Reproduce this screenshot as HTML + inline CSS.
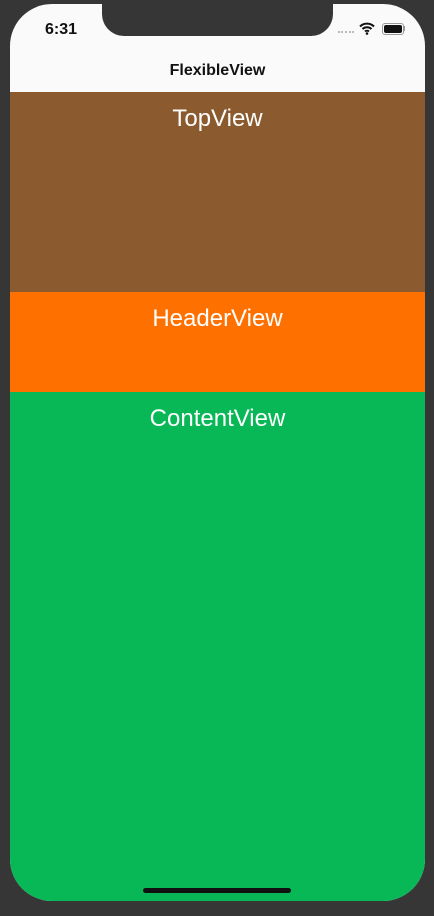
<!DOCTYPE html><html><head><style>
body{margin:0;width:434px;height:916px;background:#363636;position:relative;overflow:hidden;font-family:"Liberation Sans",sans-serif}
.scr{position:absolute;left:10px;top:4px;width:415px;height:897px;border-radius:42px;overflow:hidden;background:#fafafa}
.notch{position:absolute;left:92px;top:-2px;width:231px;height:34px;background:#363636;border-radius:0 0 22px 22px}
.t{position:absolute;left:0;width:415px;text-align:center;color:#fff;font-size:24px}
</style></head><body>
<div class="scr">
<div class="notch"></div>
<div style="position:absolute;left:35px;top:17px;font-size:16px;font-weight:bold;color:#111">6:31</div>
<div style="position:absolute;left:328px;top:27px;width:16px;height:2px;border-top:2px dotted #bbb"></div>
<svg style="position:absolute;left:349px;top:18px" width="16" height="13" viewBox="0 0 16 13"><path d="M1 4.5a10 10 0 0 1 14 0M3.5 7a6.5 6.5 0 0 1 9 0M6 9.5a3 3 0 0 1 4 0" stroke="#111" stroke-width="2" fill="none"/><circle cx="8" cy="11.5" r="1.3" fill="#111"/></svg>
<div style="position:absolute;left:372px;top:19px;width:20px;height:10px;border:1px solid #999;border-radius:3px"><div style="margin:1px;height:8px;background:#111;border-radius:2px"></div></div>
<div style="position:absolute;left:393px;top:22px;width:2px;height:5px;background:#999"></div>
<div style="position:absolute;left:0;top:58px;width:415px;text-align:center;font-size:16px;font-weight:bold;color:#111">FlexibleView</div>
<div style="position:absolute;left:0;top:88px;width:415px;height:200px;background:#8b5a2e"></div>
<div style="position:absolute;left:0;top:288px;width:415px;height:100px;background:#fe7101"></div>
<div style="position:absolute;left:0;top:388px;width:415px;height:509px;background:#08b755"></div>
<div class="t" style="top:101px">TopView</div>
<div class="t" style="top:301px">HeaderView</div>
<div class="t" style="top:401px">ContentView</div>
<div style="position:absolute;left:133px;top:884px;width:148px;height:5px;background:#111;border-radius:3px"></div>
</div>
</body></html>
